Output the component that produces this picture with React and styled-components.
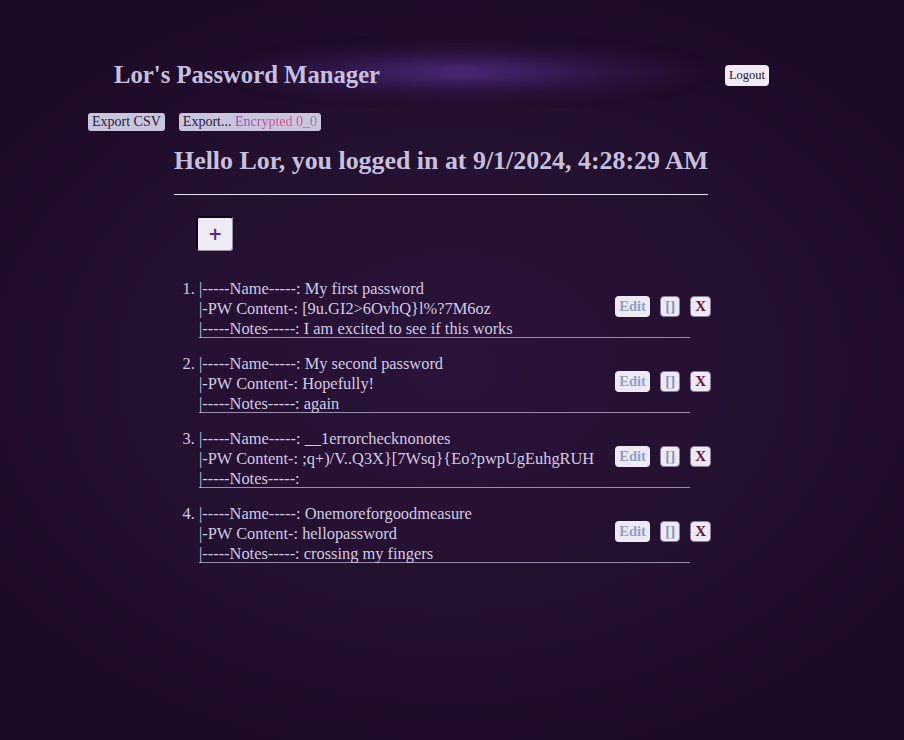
import React from "react";
import styled, { createGlobalStyle } from "styled-components";

const Global = createGlobalStyle`
  html, body { margin: 0; padding: 0; }
  body {
    min-height: 740px;
    background: radial-gradient(ellipse 62% 55% at 50% 50%, #2a1339 0%, #24102f 55%, #1d0a27 100%);
    font-family: "Liberation Serif", serif;
    color: #d2cae2;
  }
`;

const Page = styled.div`
  position: relative;
  width: 904px;
  min-height: 740px;
  box-sizing: border-box;
  padding-top: 58px;
`;

const Glow = styled.div`
  position: absolute;
  left: 240px;
  top: 46px;
  width: 500px;
  height: 52px;
  border-radius: 50%;
  background: radial-gradient(ellipse 50% 50% at 44% 50%, rgba(88, 50, 144, 0.9) 0%, rgba(66, 34, 110, 0.5) 50%, rgba(40, 16, 60, 0) 100%);
  filter: blur(7px);
  pointer-events: none;
`;

const Header = styled.header`
  position: relative;
  display: flex;
  align-items: center;
  justify-content: space-between;
  padding: 0 135px 0 114px;
  height: 34px;
`;

const Title = styled.h1`
  margin: 0;
  font-size: 24.7px;
  font-weight: 700;
  color: #c6c0de;
`;

const SmallBtn = styled.button`
  font-family: "Liberation Serif", serif;
  font-size: 12.5px;
  padding: 3px 4px;
  border: none;
  border-radius: 4px;
  background: #f1ebf7;
  color: #1e1430;
  line-height: 15px;
  cursor: pointer;
`;

const ExportRow = styled.div`
  display: flex;
  gap: 14px;
  padding-left: 88px;
  margin-top: 21px;
`;

const ExportBtn = styled.button`
  font-family: "Liberation Serif", serif;
  font-size: 14px;
  line-height: 16px;
  padding: 1px 4px;
  border: none;
  background: #c9c5dd;
  color: #261a3c;
  border-radius: 3px;
`;

const Grad = styled.span`
  background: linear-gradient(90deg, #8c4bb8 0%, #d8538c 60%, #e0478a 82%, #8a8a8a 100%);
  -webkit-background-clip: text;
  background-clip: text;
  color: transparent;
`;

const Main = styled.main`
  width: 534px;
  margin-left: 174px;
`;

const Hello = styled.h2`
  margin: 15px 0 0;
  font-size: 25.9px;
  font-weight: 700;
  color: #c6c0de;
  line-height: 30px;
  white-space: nowrap;
`;

const Rule = styled.hr`
  margin: 18px 0 0;
  border: none;
  border-top: 1.5px solid #e8e2f0;
  height: 0;
`;

const AddBtn = styled.button`
  margin: 21px 0 0 22px;
  width: 37px;
  height: 35px;
  background: #efebf4;
  border: 1px solid #9a90a8;
  border-top: 2px solid #0e0614;
  border-left: 2px solid #0e0614;
  border-radius: 3px;
  color: #55287e;
  font-family: "DejaVu Sans", sans-serif;
  font-weight: 700;
  font-size: 17px;
  line-height: 1;
  display: flex;
  align-items: center;
  justify-content: center;
  padding: 0;
`;

const List = styled.ol`
  margin: 28px 0 0;
  padding-left: 25px;
  font-size: 16.4px;
  list-style: decimal;
`;

const Item = styled.li`
  margin-bottom: 16px;
  &::marker { color: #d2cae2; }
`;

const ItemRow = styled.div`
  display: flex;
  align-items: center;
  justify-content: space-between;
  width: 512px;
`;

const Fields = styled.div`
  width: 493px;
  border-bottom: 1px solid #9b8cab;
  line-height: 20px;
`;

const Line = styled.div`
  white-space: nowrap;
  height: ${(p) => (p.$last ? "18px" : "20px")};
`;

const Actions = styled.div`
  display: flex;
  align-items: center;
  gap: 10px;
  margin-left: -75px;
  margin-top: -4px;
`;

const ActBtn = styled.button`
  font-family: "Liberation Serif", serif;
  font-weight: 700;
  font-size: ${(p) => p.$size || "14.5px"};
  height: 21px;
  min-width: ${(p) => p.$w || "20px"};
  padding: 0 4px;
  border-radius: 4px;
  border: ${(p) => (p.$outlined ? "1px solid #8a7f96" : "none")};
  background: #eeeaf5;
  color: ${(p) => p.$color};
  display: flex;
  align-items: center;
  justify-content: center;
  line-height: 1;
`;

const entries = [
  { name: "My first password", pw: "[9u.GI2>6OvhQ}l%?7M6oz", notes: "I am excited to see if this works" },
  { name: "My second password", pw: "Hopefully!", notes: "again" },
  { name: "__1errorchecknonotes", pw: ";q+)/V..Q3X}[7Wsq}{Eo?pwpUgEuhgRUH", notes: "" },
  { name: "Onemoreforgoodmeasure", pw: "hellopassword", notes: "crossing my fingers" },
];

export default function App() {
  return (
    <>
      <Global />
      <Page>
        <Glow />
        <Header>
          <Title>Lor's Password Manager</Title>
          <SmallBtn>Logout</SmallBtn>
        </Header>
        <ExportRow>
          <ExportBtn>Export CSV</ExportBtn>
          <ExportBtn>
            Export... <Grad>Encrypted 0_0</Grad>
          </ExportBtn>
        </ExportRow>
        <Main>
          <Hello>Hello Lor, you logged in at 9/1/2024, 4:28:29 AM</Hello>
          <Rule />
          <AddBtn>+</AddBtn>
          <List>
            {entries.map((e, i) => (
              <Item key={i}>
                <ItemRow>
                  <Fields>
                    <Line>|-----Name-----: {e.name}</Line>
                    <Line>|-PW Content-: {e.pw}</Line>
                    <Line $last>|-----Notes-----: {e.notes}</Line>
                  </Fields>
                  <Actions>
                    <ActBtn $color="#8fa2c2" $w="35px">Edit</ActBtn>
                    <ActBtn $color="#8494b6" $outlined $size="15px">[]</ActBtn>
                    <ActBtn $color="#6b1236" $outlined $size="15px">X</ActBtn>
                  </Actions>
                </ItemRow>
              </Item>
            ))}
          </List>
        </Main>
      </Page>
    </>
  );
}
